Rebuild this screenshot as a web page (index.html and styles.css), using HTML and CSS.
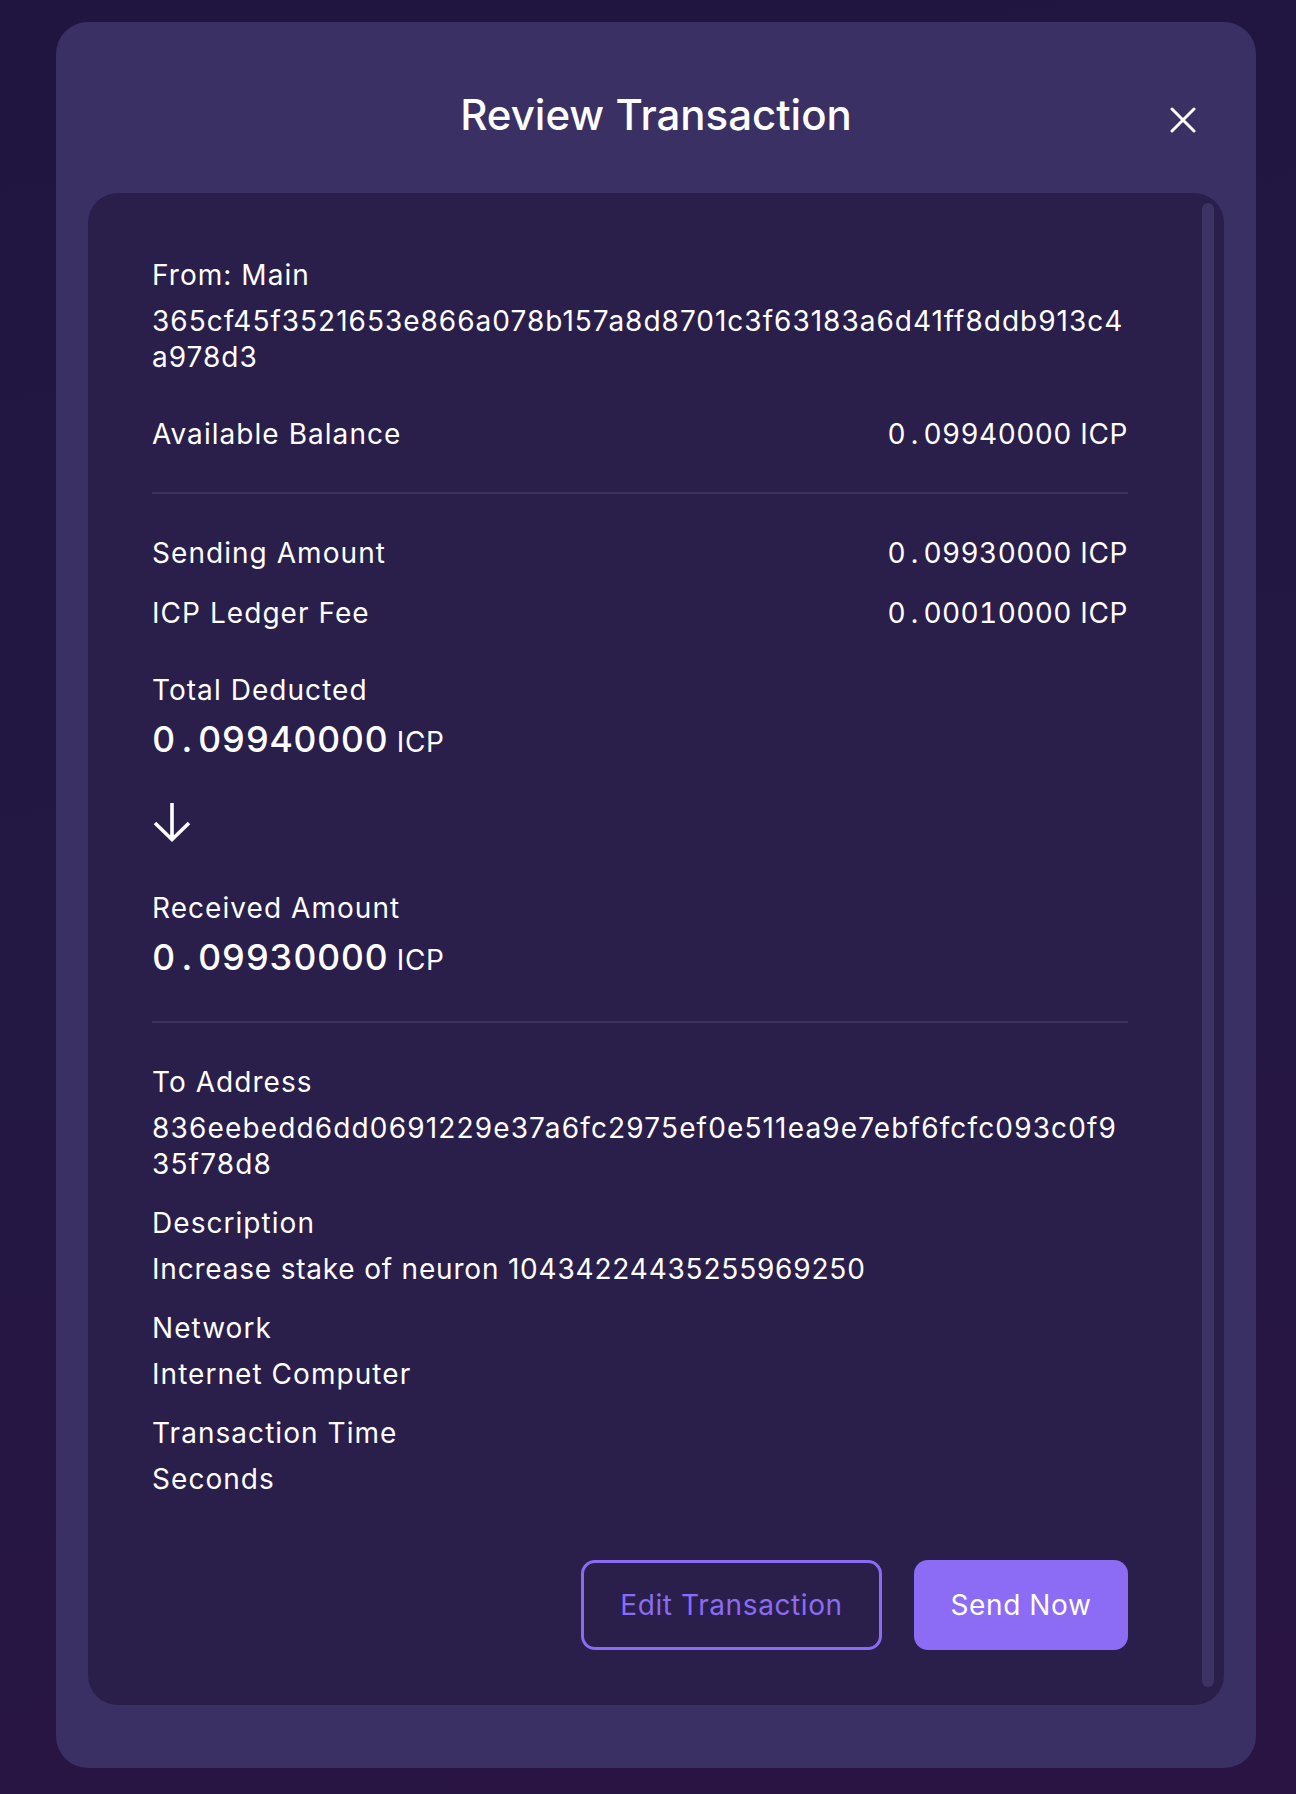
FILE: index.html
```html
<!DOCTYPE html>
<html lang="en">
<head>
<meta charset="utf-8">
<title>Review Transaction</title>
<link rel="stylesheet" href="styles.css">
</head>
<body>
<div class="modal">
  <header class="modal-header">
    <span></span>
    <h1 class="title">Review Transaction</h1>
    <button class="close" aria-label="Close">
      <svg width="26" height="26" viewBox="0 0 26 26"><path d="M2 2 L24 24 M24 2 L2 24" stroke="#fff" stroke-width="3" stroke-linecap="round" fill="none"/></svg>
    </button>
  </header>
  <section class="card">
    <div class="scrollbar"></div>
    <div class="field">
      <div class="label">From: Main</div>
      <div class="value address">365cf45f3521653e866a078b157a8d8701c3f63183a6d41ff8ddb913c4a978d3</div>
    </div>
    <div class="row first-row">
      <span class="label">Available Balance</span>
      <span class="amount"><span class="num">0<span class="dot">.</span>09940000</span> ICP</span>
    </div>
    <hr class="divider">
    <div class="row">
      <span class="label">Sending Amount</span>
      <span class="amount"><span class="num">0<span class="dot">.</span>09930000</span> ICP</span>
    </div>
    <div class="row gap">
      <span class="label">ICP Ledger Fee</span>
      <span class="amount"><span class="num">0<span class="dot">.</span>00010000</span> ICP</span>
    </div>
    <div class="field total">
      <div class="label">Total Deducted</div>
      <div class="big"><span class="bignum">0<span class="dot">.</span>09940000</span> <span class="unit">ICP</span></div>
    </div>
    <div class="arrow">
      <svg width="40" height="40" viewBox="0 0 40 40"><path d="M20 1 V37 M3 21 L20 37.5 L37 21" stroke="#fff" stroke-width="3.6" fill="none"/></svg>
    </div>
    <div class="field">
      <div class="label">Received Amount</div>
      <div class="big"><span class="bignum">0<span class="dot">.</span>09930000</span> <span class="unit">ICP</span></div>
    </div>
    <hr class="divider">
    <div class="field">
      <div class="label">To Address</div>
      <div class="value address address-to">836eebedd6dd0691229e37a6fc2975ef0e511ea9e7ebf6fcfc093c0f935f78d8</div>
    </div>
    <div class="field gap-sm">
      <div class="label">Description</div>
      <div class="value desc">Increase stake of neuron 10434224435255969250</div>
    </div>
    <div class="field gap-sm">
      <div class="label">Network</div>
      <div class="value">Internet Computer</div>
    </div>
    <div class="field gap-sm">
      <div class="label">Transaction Time</div>
      <div class="value">Seconds</div>
    </div>
    <div class="actions">
      <button class="btn btn-outline">Edit Transaction</button>
      <button class="btn btn-primary">Send Now</button>
    </div>
  </section>
</div>
</body>
</html>
```
FILE: styles.css
```css
* { box-sizing: border-box; }
html, body { margin: 0; padding: 0; }
body {
  width: 1296px;
  min-height: 1794px;
  background: linear-gradient(170deg, #201540 0%, #231844 50%, #2a1443 100%);
  font-family: "Inter", "Noto Sans", sans-serif;
  color: #ffffff;
  padding: 22px 0 0 56px;
}
.modal {
  width: 1200px;
  background: #3a3063;
  border-radius: 32px;
  padding: 0 32px 63px 32px;
}
.modal-header {
  height: 171px;
  display: grid;
  grid-template-columns: 1fr auto 1fr;
  align-items: start;
  padding-top: 70px;
}
.title {
  margin: 0;
  font-size: 42px;
  line-height: 46px;
  font-weight: 500;
  letter-spacing: 0;
  color: #fff;
}
.close {
  justify-self: end;
  background: none;
  border: 0;
  padding: 0;
  margin: 15px 28px 0 0;
  width: 26px;
  height: 26px;
  display: flex;
}
.card {
  position: relative;
  background: #2a1e4b;
  border-radius: 30px;
  padding: 64px 96px 55px 64px;
  display: flex;
  flex-direction: column;
}
.scrollbar {
  position: absolute;
  right: 10px;
  top: 10px;
  bottom: 18px;
  width: 12px;
  border-radius: 6px;
  background: #3d3362;
}
.label, .value, .amount {
  font-size: 28px;
  line-height: 36px;
  font-weight: 400;
  letter-spacing: 1.05px;
}
.amount { letter-spacing: 0.6px; }
.value { margin-top: 10px; }
.desc { letter-spacing: 0.8px; }
.address { word-break: break-all; letter-spacing: 1.0px; }
.address-to { letter-spacing: 1.15px; }
.row {
  display: flex;
  justify-content: space-between;
  align-items: baseline;
}
.first-row { margin-top: 41px; }
.gap { margin-top: 24px; }
.gap-sm { margin-top: 23px; }
.num { font-variant-numeric: tabular-nums; letter-spacing: 0.4px; }
.dot {
  display: inline-block;
  width: 0.62em;
  text-align: center;
}
.divider {
  border: 0;
  height: 2px;
  background: #3c325f;
  margin: 40px 0 41px 0;
  width: 100%;
}
.total { margin-top: 41px; }
.big {
  margin-top: 7px;
  height: 48px;
  line-height: 48px;
  white-space: nowrap;
}
.bignum {
  font-size: 36px;
  line-height: 48px;
  font-weight: 500;
  font-variant-numeric: tabular-nums;
  letter-spacing: 0.45px;
}
.unit {
  font-size: 28px;
  line-height: 48px;
  letter-spacing: 0.6px;
  margin-left: 4px;
}
.arrow {
  margin-top: 39px;
  height: 40px;
  margin-bottom: 48px;
  display: flex;
}
.actions {
  margin-top: 63px;
  display: flex;
  justify-content: flex-end;
  gap: 32px;
}
.btn {
  height: 90px;
  border-radius: 14px;
  font-family: "Inter", "Noto Sans", sans-serif;
  font-size: 28px;
  font-weight: 400;
  letter-spacing: 0.6px;
  cursor: pointer;
}
.btn-outline {
  width: 301px;
  background: transparent;
  border: 3px solid #8a6cf3;
  color: #8a6cf3;
}
.btn-primary {
  width: 214px;
  background: #8c6cf5;
  border: 0;
  color: #fff;
}
```
